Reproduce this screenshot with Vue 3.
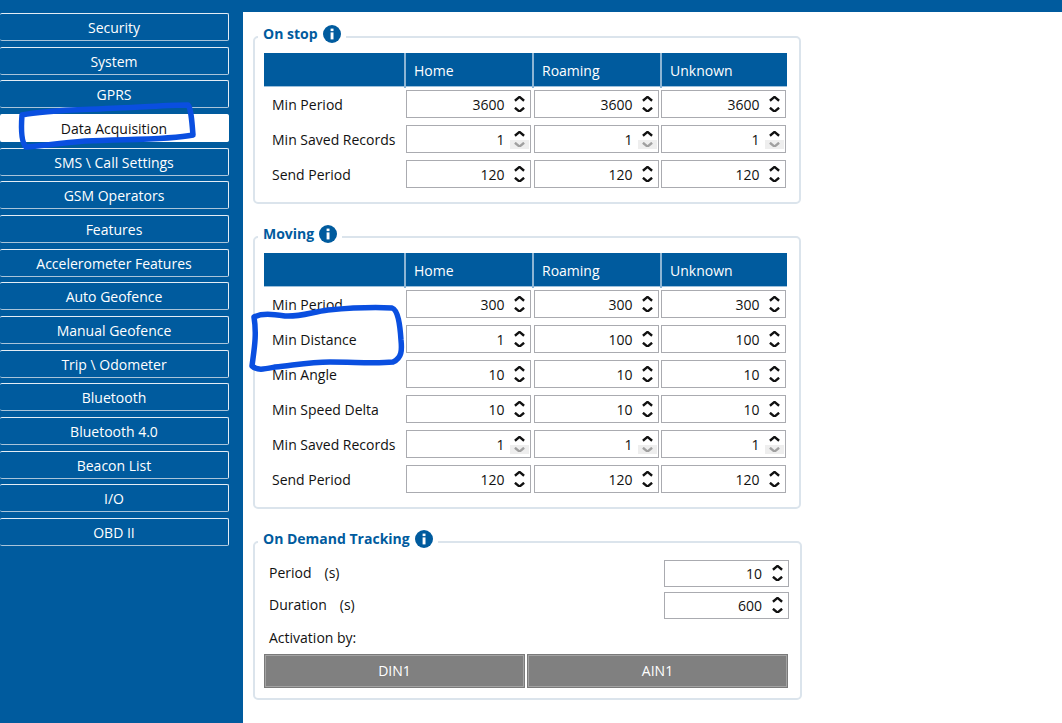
<script setup>
const menu = ['Security', 'System', 'GPRS', 'Data Acquisition', 'SMS \\ Call Settings', 'GSM Operators', 'Features', 'Accelerometer Features', 'Auto Geofence', 'Manual Geofence', 'Trip \\ Odometer', 'Bluetooth', 'Bluetooth 4.0', 'Beacon List', 'I/O', 'OBD II']
const heads = ['Home', 'Roaming', 'Unknown']
const panels = [
  { title: 'On stop', rows: [
    { label: 'Min Period', vals: [3600, 3600, 3600] },
    { label: 'Min Saved Records', vals: [1, 1, 1], min: true },
    { label: 'Send Period', vals: [120, 120, 120] }
  ] },
  { title: 'Moving', rows: [
    { label: 'Min Period', vals: [300, 300, 300] },
    { label: 'Min Distance', vals: [1, 100, 100] },
    { label: 'Min Angle', vals: [10, 10, 10] },
    { label: 'Min Speed Delta', vals: [10, 10, 10] },
    { label: 'Min Saved Records', vals: [1, 1, 1], min: true },
    { label: 'Send Period', vals: [120, 120, 120] }
  ] }
]
const demand = [
  { label: 'Period', unit: '(s)', val: 10 },
  { label: 'Duration', unit: '(s)', val: 600 }
]
</script>

<template>
  <div class="app">
    <nav class="side">
      <button v-for="m in menu" :key="m" class="nav" :class="{ active: m === 'Data Acquisition' }">{{ m }}</button>
    </nav>
    <main class="main">
      <fieldset v-for="p in panels" :key="p.title" class="panel">
        <legend class="legend">
          <span>{{ p.title }}</span>
          <svg class="info" viewBox="0 0 18 18"><circle cx="9" cy="9" r="9" fill="#005b9e"/><rect x="7.6" y="7.4" width="2.9" height="7" fill="#fff"/><rect x="7.6" y="3.6" width="2.9" height="2.5" fill="#fff"/></svg>
        </legend>
        <div class="thead">
          <div class="th"></div>
          <div v-for="h in heads" :key="h" class="th">{{ h }}</div>
        </div>
        <div class="tbody">
          <template v-for="r in p.rows" :key="r.label">
            <div class="label">{{ r.label }}</div>
            <div v-for="(v, i) in r.vals" :key="i" class="spin">
              <span class="num">{{ v }}</span>
              <span class="arrows">
                <svg class="chev" viewBox="0 0 12 6"><path d="M1 5.2 6 1l5 4.2" /></svg>
                <svg class="chev" :class="{ off: r.min }" viewBox="0 0 12 6"><path d="M1 .8 6 5l5-4.2" /></svg>
              </span>
            </div>
          </template>
        </div>
      </fieldset>

      <fieldset class="panel demand">
        <legend class="legend">
          <span>On Demand Tracking</span>
          <svg class="info" viewBox="0 0 18 18"><circle cx="9" cy="9" r="9" fill="#005b9e"/><rect x="7.6" y="7.4" width="2.9" height="7" fill="#fff"/><rect x="7.6" y="3.6" width="2.9" height="2.5" fill="#fff"/></svg>
        </legend>
        <div v-for="d in demand" :key="d.label" class="drow">
          <div class="dlabel"><span>{{ d.label }}</span><span>{{ d.unit }}</span></div>
          <div class="spin wide">
            <span class="num">{{ d.val }}</span>
            <span class="arrows">
              <svg class="chev" viewBox="0 0 12 6"><path d="M1 5.2 6 1l5 4.2" /></svg>
              <svg class="chev" viewBox="0 0 12 6"><path d="M1 .8 6 5l5-4.2" /></svg>
            </span>
          </div>
        </div>
        <div class="activation">Activation by:</div>
        <div class="btns">
          <button class="gray">DIN1</button>
          <button class="gray">AIN1</button>
        </div>
      </fieldset>
    </main>

    <svg class="marks" viewBox="0 0 1062 723">
      <path d="M22 115C45 110 80 110 118 108 145 107 170 105 188 105 191 108 192 122 193 135 170 140 130 139 85 141 60 143 40 146 26 147 21 142 21 128 22 115Z" />
      <path d="M254 317C262 313 272 314 285 316 300 317 312 312 328 310 350 308 375 307 392 308 398 310 400 325 401 340 402 350 402 358 393 362 375 364 355 362 330 362 310 362 295 365 275 367 265 369 257 371 252 366 254 350 257 335 254 317Z" />
    </svg>
  </div>
</template>

<style>
html, body { margin: 0; background: #fff; }
</style>

<style scoped>
.app {
  position: relative;
  width: 1062px;
  height: 723px;
  overflow: hidden;
  display: flex;
  background: #005b9e;
  font-family: "Open Sans", "Noto Sans", sans-serif;
  font-size: 14px;
  color: #111;
}
.side {
  width: 243px;
  flex: none;
  box-sizing: border-box;
  padding: 13px 14px 0 0;
  display: flex;
  flex-direction: column;
  gap: 5.67px;
}
.nav {
  height: 28px;
  flex: none;
  padding: 1px 0 0;
  background: #005b9e;
  color: #fff;
  border: 1px solid #e4edf5;
  border-bottom-color: #a9c4da;
  border-left-width: 0;
  border-radius: 2px;
  font: inherit;
}
.nav.active { background: #fff; color: #111; border-color: #fff; }
.main {
  flex: 1;
  margin-top: 12px;
  background: #fff;
  padding: 12px 0 0 10px;
}
.panel {
  width: 547px;
  box-sizing: border-box;
  margin: 0 0 20px;
  padding: 4px 12px 14px 9px;
  border: 2px solid #dbe4ec;
  border-radius: 5px;
}
.legend {
  margin-left: -6px;
  padding: 0 5px 5px;
  height: 20px;
  box-sizing: content-box;
  display: flex;
  align-items: center;
  gap: 5px;
  line-height: 20px;
  font-weight: 700;
  color: #005b9e;
}
.info { width: 18px; height: 18px; flex: none; }
.thead {
  display: grid;
  grid-template-columns: 140px 128px 128px 127px;
  height: 34px;
  background: #005b9e;
  border-bottom: 1px solid #9cc0dc;
  box-sizing: border-box;
}
.th {
  color: #fff;
  line-height: 35px;
  padding-left: 8px;
  border-left: 2px solid #8db5d4;
}
.th:first-child { border-left: 0; }
.tbody {
  display: grid;
  grid-template-columns: 142px 128px 127px 126px;
  grid-auto-rows: 28px;
  row-gap: 7px;
  margin-top: 3px;
  align-items: center;
}
.label { padding-left: 8px; white-space: nowrap; }
.spin {
  width: 125px;
  height: 28px;
  box-sizing: border-box;
  border: 1.5px solid #aaabb0;
  background: #fff;
  display: flex;
  align-items: center;
  justify-content: flex-end;
  padding-right: 1px;
}
.num { margin-right: 5.5px; }
.arrows {
  width: 19px;
  display: flex;
  flex-direction: column;
  align-items: center;
  gap: 5px;
}
.chev { width: 11px; height: 5.5px; display: block; fill: none; stroke: #111; stroke-width: 2.6; }
.chev.off {
  box-sizing: content-box;
  width: 19px;
  height: 5.5px;
  padding: 2px 0;
  margin: -2px 0;
  background: #eeeeee;
  stroke: #a0a0a0;
}
.demand { padding: 6px 12px 10px 9px; margin-bottom: 0; }
.drow {
  display: flex;
  justify-content: space-between;
  align-items: center;
  height: 26.5px;
  margin-bottom: 5.5px;
}
.dlabel { padding-left: 5px; display: flex; gap: 13px; margin-top: -1px; }
.spin.wide { height: 26.5px; margin-right: -0.5px; }
.activation { padding-left: 5px; height: 20px; line-height: 20px; margin-top: 9px; }
.btns {
  display: grid;
  grid-template-columns: 261px 261px;
  column-gap: 2px;
  margin-top: 6px;
}
.gray {
  height: 34px;
  padding: 0;
  font: inherit;
  color: #fff;
  background: #808080;
  border: 1px solid #7a7a7a;
  box-shadow: inset 0 0 0 1px #a3a3a3;
}
.marks {
  position: absolute;
  left: 0;
  top: 0;
  width: 1062px;
  height: 723px;
  pointer-events: none;
  fill: none;
  stroke: #0a4fe0;
  stroke-width: 5.5;
  stroke-linecap: round;
  stroke-linejoin: round;
}
</style>
